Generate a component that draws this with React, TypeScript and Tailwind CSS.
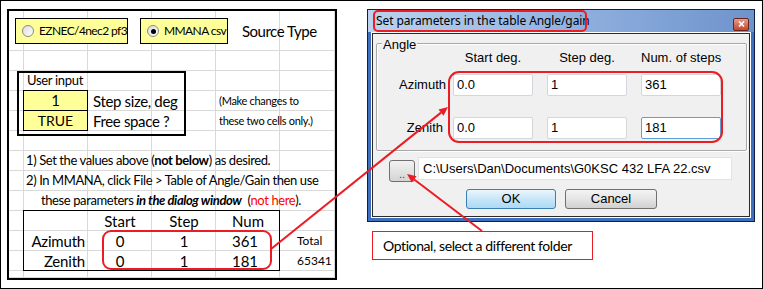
const calibri = "font-['Lato','Carlito',sans-serif]";
const arial = "font-['Liberation_Sans',Arial,sans-serif]";

function Radio({ checked }: { checked?: boolean }) {
  return (
    <span className="w-[12px] h-[12px] rounded-full border border-[#8a8a8a] bg-gradient-to-br from-[#dcdcdc] to-white flex items-center justify-center shrink-0">
      {checked && <span className="w-[5px] h-[5px] rounded-full bg-black" />}
    </span>
  );
}

function SheetPanel() {
  const cells = Array.from({ length: 78 });
  const grid = "grid grid-cols-[15px_64px_64px_64px_64px_55px] grid-rows-[40px_repeat(11,20px)_7px]";
  return (
    <div className={`w-[330px] h-[271px] border-2 border-black grid ${calibri} text-black`}>
      <div className={`${grid} col-start-1 row-start-1`}>
        {cells.map((_, i) => (
          <div key={i} className="border-r border-b border-[#d9d9d9]" />
        ))}
      </div>
      <div className={`${grid} col-start-1 row-start-1`}>
        <div className="col-start-1 col-span-6 row-start-1 flex items-start pt-[7px] pl-[6px]">
          <div className="w-[113px] h-[26px] bg-[#ffff99] border border-black flex items-center gap-[5px] pl-[6px] text-[12px] tracking-[-0.6px] whitespace-nowrap">
            <Radio />
            <span>EZNEC/4nec2 pf3</span>
          </div>
          <div className="ml-[12px] w-[88px] h-[26px] bg-[#ffff99] border border-black flex items-center gap-[5px] pl-[6px] text-[12px] tracking-[-0.6px] whitespace-nowrap">
            <Radio checked />
            <span>MMANA csv</span>
          </div>
          <div className="ml-[14px] h-[26px] flex items-center text-[15px] tracking-[-0.5px] whitespace-nowrap">Source Type</div>
        </div>

        <div className="col-start-2 row-start-3 flex items-center pl-[3px] text-[13px] tracking-[-0.3px] whitespace-nowrap">User input</div>
        <div className="col-start-2 row-start-4 -ml-px -mt-px border border-black bg-[#ffff99] flex items-center justify-center text-[15px]">1</div>
        <div className="col-start-2 row-start-5 -ml-px -mt-px border border-black bg-[#ffff99] flex items-center justify-center text-[14px]">TRUE</div>
        <div className="col-start-3 col-span-2 row-start-4 flex items-center pl-[5px] text-[15px] tracking-[-0.35px] whitespace-nowrap">Step size, deg</div>
        <div className="col-start-3 col-span-2 row-start-5 flex items-center pl-[5px] text-[15px] tracking-[-0.35px] whitespace-nowrap">Free space ?</div>
        <div className="col-start-5 col-span-2 row-start-4 flex items-center pl-[3px] text-[11px] tracking-[-0.3px] whitespace-nowrap">(Make changes to</div>
        <div className="col-start-5 col-span-2 row-start-5 flex items-center pl-[3px] text-[11px] tracking-[-0.3px] whitespace-nowrap">these two cells only.)</div>
        <div className="col-start-1 col-span-4 row-start-3 row-span-4 ml-[8px] w-[169px] h-[65px] border-2 border-black pointer-events-none" />

        <div className="col-start-2 col-span-5 row-start-7 flex items-center pl-[2px] text-[13px] tracking-[-0.4px] whitespace-nowrap">
          1) Set the values above (<b>not below</b>) as desired.
        </div>
        <div className="col-start-2 col-span-5 row-start-8 flex items-center pl-[2px] text-[13px] tracking-[-0.4px] whitespace-nowrap">
          2) In MMANA, click File &gt; Table of Angle/Gain then use
        </div>
        <div className="col-start-2 col-span-5 row-start-9 flex items-center pl-[17px] text-[13px] tracking-[-0.4px] whitespace-nowrap">
          these parameters&nbsp;<b><i>in the dialog window</i></b>&nbsp; (<span className="text-[#ff0000]">not here</span>).
        </div>

        <div className="col-start-3 row-start-10 flex items-center justify-center text-[15px]">Start</div>
        <div className="col-start-4 row-start-10 flex items-center justify-center text-[15px]">Step</div>
        <div className="col-start-5 row-start-10 flex items-center justify-center text-[15px]">Num</div>
        <div className="col-start-2 row-start-11 flex items-center justify-end pr-[3px] text-[15px] tracking-[-0.2px]">Azimuth</div>
        <div className="col-start-3 row-start-11 flex items-center justify-center text-[15px]">0</div>
        <div className="col-start-4 row-start-11 flex items-center justify-center text-[15px]">1</div>
        <div className="col-start-5 row-start-11 flex items-center justify-center text-[15px] pr-[6px]">361</div>
        <div className="col-start-6 row-start-11 flex items-center pl-[17px] text-[12px]">Total</div>
        <div className="col-start-2 row-start-12 flex items-center justify-end pr-[3px] text-[15px] tracking-[-0.2px]">Zenith</div>
        <div className="col-start-3 row-start-12 flex items-center justify-center text-[15px]">0</div>
        <div className="col-start-4 row-start-12 flex items-center justify-center text-[15px]">1</div>
        <div className="col-start-5 row-start-12 flex items-center justify-center text-[15px] pr-[6px]">181</div>
        <div className="col-start-6 row-start-12 flex items-center pl-[17px] text-[12px]">65341</div>
        <div className="col-start-2 col-span-4 row-start-10 row-span-3 -ml-px -mt-px border border-black pointer-events-none" />
      </div>
    </div>
  );
}

function Field({ value, focused }: { value: string; focused?: boolean }) {
  return (
    <div
      className={`w-[80px] h-[22px] bg-white border rounded-[2px] flex items-center pl-[3px] text-[13px] ${
        focused ? "border-[#5f9fd6]" : "border-[#d3d6db]"
      }`}
    >
      {value}
    </div>
  );
}

function Dialog() {
  return (
    <div className={`w-[388px] h-[213px] border border-[#0f1f3f] bg-[#3f6fbf] flex flex-col ${arial}`}>
      <div className="h-[22px] shrink-0 bg-gradient-to-r from-[#bcd2ee] via-[#93b3e0] to-[#6e93cc] flex items-center justify-between pl-[8px] pr-[5px]">
        <span className="font-['Noto_Sans',sans-serif] text-[12px] tracking-[-0.1px] text-black">Set parameters in the table Angle/gain</span>
        <span className="mt-[6px] w-[16px] h-[13px] rounded-[2px] border border-[#6b2418] bg-gradient-to-b from-[#e39a8c] to-[#c1452f] flex items-center justify-center">
          <svg width="7" height="6" viewBox="0 0 7 6">
            <path d="M1 0.5 L6 5.5 M6 0.5 L1 5.5" stroke="white" strokeWidth="1.6" />
          </svg>
        </span>
      </div>
      <div className="flex-1 mx-[3px] mb-[3px] border border-white flex">
        <div className="flex-1 border border-[#2a2a2a] bg-[#f0f0f0] flex flex-col text-black">
          <div className="relative mt-[9px] ml-[3px] mr-[2px] h-[108px] border border-[#a8a8a8] rounded-[2px] shadow-[inset_1px_1px_0_#fff,1px_1px_0_#fff] pt-[6px]">
            <span className="absolute -top-[9px] left-[5px] bg-[#f0f0f0] px-[1px] text-[13px]">Angle</span>
            <div className="flex h-[16px] items-center text-[13px]">
              <div className="w-[70px]" />
              <div className="ml-[6px] w-[80px] text-center">Start deg.</div>
              <div className="ml-[14px] w-[80px] text-center">Step deg.</div>
              <div className="ml-[14px] w-[80px] text-center whitespace-nowrap">Num. of steps</div>
            </div>
            <div className="flex items-center mt-[8px] text-[13px]">
              <div className="w-[70px] text-right pr-[1px]">Azimuth</div>
              <div className="ml-[6px]"><Field value="0.0" /></div>
              <div className="ml-[14px]"><Field value="1" /></div>
              <div className="ml-[14px]"><Field value="361" /></div>
            </div>
            <div className="flex items-center mt-[21px] text-[13px]">
              <div className="w-[66px] text-right">Zenith</div>
              <div className="ml-[10px]"><Field value="0.0" /></div>
              <div className="ml-[14px]"><Field value="1" /></div>
              <div className="ml-[14px]"><Field value="181" focused /></div>
            </div>
          </div>
          <div className="flex items-start mt-[6px] ml-[16px]">
            <div className="mt-[3px] w-[26px] h-[22px] rounded-[3px] border border-[#707070] bg-gradient-to-b from-[#f2f2f2] to-[#d4d4d4] flex items-end justify-center text-[11px] leading-[14px] text-[#2a4a80]">
              ..
            </div>
            <div className="ml-[3px] w-[314px] h-[23px] bg-white border border-[#dfe3e8] flex items-center pl-[4px] text-[13px] whitespace-nowrap">
              C:\Users\Dan\Documents\G0KSC 432 LFA 22.csv
            </div>
          </div>
          <div className="flex mt-[7px] ml-[93px]">
            <div className="w-[90px] h-[20px] rounded-[3px] border border-[#3c7fb1] bg-gradient-to-b from-[#eaf6fd] via-[#c8e6f8] to-[#a9daf5] flex items-center justify-center text-[13px]">
              OK
            </div>
            <div className="ml-[9px] w-[92px] h-[20px] rounded-[3px] border border-[#707070] bg-gradient-to-b from-[#f3f3f3] via-[#e5e5e5] to-[#d0d0d0] flex items-center justify-center text-[13px]">
              Cancel
            </div>
          </div>
        </div>
      </div>
    </div>
  );
}

function Annotations() {
  const red = "#ec1c24";
  return (
    <svg className="absolute left-[-1px] top-[-1px] pointer-events-none" width="763" height="289" viewBox="0 0 763 289">
      <rect x="103" y="231" width="168" height="38" rx="8" fill="none" stroke={red} strokeWidth="2" />
      <rect x="449" y="72" width="273" height="70" rx="10" fill="none" stroke={red} strokeWidth="2" />
      <rect x="374" y="11" width="212" height="20" rx="4" fill="none" stroke={red} strokeWidth="2" />
      <line x1="271" y1="249" x2="441" y2="112.6" stroke={red} strokeWidth="2" />
      <polygon points="448,107 443.5,115.8 438.5,109.5" fill={red} />
      <line x1="482" y1="231" x2="414.2" y2="179.5" stroke={red} strokeWidth="2" />
      <polygon points="407,174 416.6,176.3 411.7,182.6" fill={red} />
    </svg>
  );
}

export default function App() {
  return (
    <div className="relative w-[763px] h-[289px] border border-black bg-white flex pt-[8px] pl-[6px]">
      <SheetPanel />
      <div className="ml-[30px] flex flex-col">
        <Dialog />
        <div className={`mt-[9px] ml-[5px] w-[221px] h-[29px] border border-[#ec1c24] bg-white flex items-center pl-[10px] text-[14px] tracking-[-0.4px] whitespace-nowrap text-black ${calibri}`}>
          Optional, select a different folder
        </div>
      </div>
      <Annotations />
    </div>
  );
}
